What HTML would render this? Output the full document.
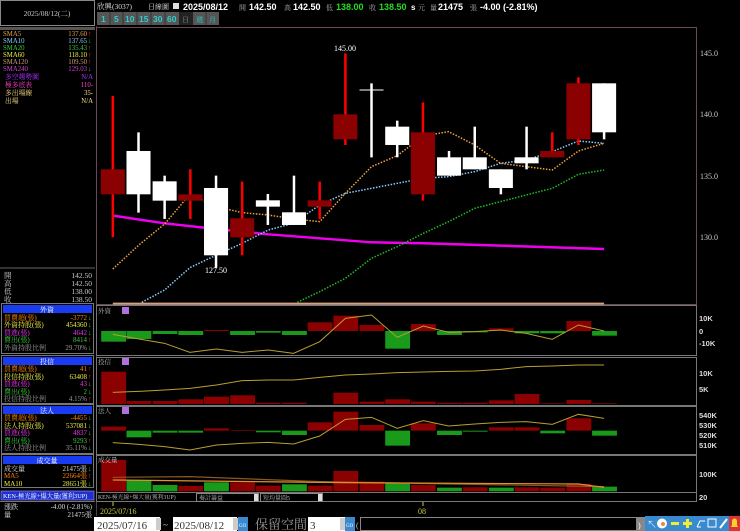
<!DOCTYPE html>
<html><head><meta charset="utf-8"><style>
html,body{margin:0;padding:0;background:#000;width:740px;height:531px;overflow:hidden}
svg{display:block}
text{font-family:"Liberation Serif","Noto Serif CJK SC","Noto Sans CJK TC",serif}
text.s{font-family:"Liberation Sans","Noto Sans CJK TC",sans-serif}
</style></head><body>
<svg width="740" height="531" viewBox="0 0 740 531" xmlns="http://www.w3.org/2000/svg" font-size="8">
<rect width="740" height="531" fill="#000"/>
<rect x="0.5" y="0.5" width="94" height="25" fill="#000" stroke="#888"/>
<text x="47" y="16" fill="#ccc" text-anchor="middle" font-size="7.5">2025/08/12(二)</text>
<rect x="0" y="27" width="95" height="3" fill="#555"/>
<g font-size="6.8">
<text x="3" y="36" fill="#e8a040">SMA5</text><text x="87" y="36" fill="#e8a040" text-anchor="end">137.60</text><text x="88" y="36" fill="#f22">↑</text>
<text x="3" y="43" fill="#8cf">SMA10</text><text x="87" y="43" fill="#8cf" text-anchor="end">137.65</text><text x="88" y="43" fill="#2c2">↓</text>
<text x="3" y="50" fill="#3c3">SMA20</text><text x="87" y="50" fill="#3c3" text-anchor="end">135.43</text><text x="88" y="50" fill="#f22">↑</text>
<text x="3" y="57" fill="#ee4">SMA60</text><text x="87" y="57" fill="#ee4" text-anchor="end">118.10</text><text x="88" y="57" fill="#f22">↑</text>
<text x="3" y="64" fill="#c9a070">SMA120</text><text x="87" y="64" fill="#c9a070" text-anchor="end">109.50</text><text x="88" y="64" fill="#f22">↑</text>
<text x="3" y="71" fill="#c4c">SMA240</text><text x="87" y="71" fill="#c4c" text-anchor="end">129.03</text><text x="88" y="71" fill="#2c2">↓</text>
<text x="5" y="79" fill="#a3f">多空趨勢圖</text><text x="93" y="79" fill="#a3f" text-anchor="end">N/A</text>
<text x="5" y="87" fill="#f4c">極多底表</text><text x="93" y="87" fill="#f4c" text-anchor="end">110-</text>
<text x="5" y="95" fill="#fd8">多出場線</text><text x="93" y="95" fill="#fd8" text-anchor="end">35-</text>
<text x="5" y="103" fill="#fd8">出場</text><text x="93" y="103" fill="#fd8" text-anchor="end">N/A</text>
</g>
<line x1="0" y1="268" x2="95" y2="268" stroke="#666"/>
<g font-size="7.5" fill="#ccc">
<text x="4" y="278">開</text><text x="92" y="278" text-anchor="end">142.50</text>
<text x="4" y="286">高</text><text x="92" y="286" text-anchor="end">142.50</text>
<text x="4" y="294">低</text><text x="92" y="294" text-anchor="end">138.00</text>
<text x="4" y="302">收</text><text x="92" y="302" text-anchor="end">138.50</text>
</g>
<g font-size="7">
<rect x="1.5" y="303.5" width="92" height="50" fill="none" stroke="#777"/>
<rect x="3" y="305" width="89" height="8" fill="#1a3cf0"/><text x="47" y="312" fill="#fff" text-anchor="middle">外資</text>
<text x="4" y="320" fill="#f80">買賣超(張)</text><text x="87" y="320" fill="#f80" text-anchor="end">-3772</text><text x="88" y="320" fill="#2c2">↓</text>
<text x="4" y="327" fill="#ee4">外資持股(張)</text><text x="87" y="327" fill="#ee4" text-anchor="end">454360</text><text x="88" y="327" fill="#2c2">↓</text>
<text x="4" y="335" fill="#e3e">買進(張)</text><text x="87" y="335" fill="#e3e" text-anchor="end">4642</text><text x="88" y="335" fill="#2c2">↓</text>
<text x="4" y="342" fill="#3c3">賣出(張)</text><text x="87" y="342" fill="#3c3" text-anchor="end">8414</text><text x="88" y="342" fill="#f22">↑</text>
<text x="4" y="350" fill="#999">外資持股比例</text><text x="87" y="350" fill="#999" text-anchor="end">29.70%</text><text x="88" y="350" fill="#2c2">↓</text>

<rect x="1.5" y="355.5" width="92" height="48" fill="none" stroke="#777"/>
<rect x="3" y="357" width="89" height="8" fill="#1a3cf0"/><text x="47" y="364" fill="#fff" text-anchor="middle">投信</text>
<text x="4" y="371" fill="#f80">買賣超(張)</text><text x="87" y="371" fill="#f80" text-anchor="end">41</text><text x="88" y="371" fill="#f22">↑</text>
<text x="4" y="379" fill="#ee4">投信持股(張)</text><text x="87" y="379" fill="#ee4" text-anchor="end">63408</text><text x="88" y="379" fill="#f22">↑</text>
<text x="4" y="386" fill="#e3e">買進(張)</text><text x="87" y="386" fill="#e3e" text-anchor="end">43</text><text x="88" y="386" fill="#2c2">↓</text>
<text x="4" y="394" fill="#3c3">賣出(張)</text><text x="87" y="394" fill="#3c3" text-anchor="end">2</text><text x="88" y="394" fill="#2c2">↓</text>
<text x="4" y="401" fill="#999">投信持股比例</text><text x="87" y="401" fill="#999" text-anchor="end">4.15%</text><text x="88" y="401" fill="#f22">↑</text>

<rect x="1.5" y="404.5" width="92" height="49" fill="none" stroke="#777"/>
<rect x="3" y="406" width="89" height="8" fill="#1a3cf0"/><text x="47" y="413" fill="#fff" text-anchor="middle">法人</text>
<text x="4" y="420" fill="#f80">買賣超(張)</text><text x="87" y="420" fill="#f80" text-anchor="end">-4455</text><text x="88" y="420" fill="#2c2">↓</text>
<text x="4" y="428" fill="#ee4">法人持股(張)</text><text x="87" y="428" fill="#ee4" text-anchor="end">537081</text><text x="88" y="428" fill="#2c2">↓</text>
<text x="4" y="435" fill="#e3e">買進(張)</text><text x="87" y="435" fill="#e3e" text-anchor="end">4837</text><text x="88" y="435" fill="#2c2">↓</text>
<text x="4" y="443" fill="#3c3">賣出(張)</text><text x="87" y="443" fill="#3c3" text-anchor="end">9293</text><text x="88" y="443" fill="#f22">↑</text>
<text x="4" y="450" fill="#999">法人持股比例</text><text x="87" y="450" fill="#999" text-anchor="end">35.11%</text><text x="88" y="450" fill="#2c2">↓</text>

<rect x="1.5" y="454.5" width="92" height="33" fill="none" stroke="#777"/>
<rect x="3" y="456" width="89" height="8" fill="#1a3cf0"/><text x="47" y="463" fill="#fff" text-anchor="middle">成交量</text>
<text x="4" y="471" fill="#ddd">成交量</text><text x="87" y="471" fill="#ddd" text-anchor="end">21475張</text><text x="88" y="471" fill="#2c2">↓</text>
<text x="4" y="478" fill="#f80">MA5</text><text x="87" y="478" fill="#f80" text-anchor="end">22664張</text><text x="88" y="478" fill="#f22">↑</text>
<text x="4" y="486" fill="#ee4">MA10</text><text x="87" y="486" fill="#ee4" text-anchor="end">28651張</text><text x="88" y="486" fill="#2c2">↓</text>

<rect x="1" y="491" width="93" height="9" fill="#2030d0" stroke="#99f" stroke-width="0.6"/>
<text x="3" y="498" fill="#fff" font-size="6.3">KEN-極光線+爆大量(獲利3UP)</text>
<line x1="0" y1="501.5" x2="95" y2="501.5" stroke="#777"/>
<text x="4" y="509" fill="#ddd">漲跌</text><text x="92" y="509" fill="#ddd" text-anchor="end">-4.00 (-2.81%)</text>
<text x="4" y="517" fill="#ddd">量</text><text x="92" y="517" fill="#ddd" text-anchor="end">21475張</text>
</g>
<rect x="94" y="517" width="3" height="14" fill="#fff"/>
<line x1="96.5" y1="26" x2="96.5" y2="516" stroke="#444"/>

<text x="97" y="9" fill="#ddd" font-size="7.5">欣興(3037)</text>
<text x="148" y="9" fill="#ddd" font-size="7">日線圖</text>
<rect x="173" y="3" width="6" height="6" fill="#ddd"/>
<g font-weight="bold" font-size="9">
<text x="183" y="10" fill="#fff" class="s">2025/08/12</text>
<text x="239" y="10" fill="#aaa" font-size="7" font-weight="normal">開</text><text x="249" y="10" fill="#fff" class="s">142.50</text>
<text x="284" y="10" fill="#aaa" font-size="7" font-weight="normal">高</text><text x="293" y="10" fill="#fff" class="s">142.50</text>
<text x="326" y="10" fill="#aaa" font-size="7" font-weight="normal">低</text><text x="336" y="10" fill="#2d2" class="s">138.00</text>
<text x="369" y="10" fill="#aaa" font-size="7" font-weight="normal">收</text><text x="379" y="10" fill="#2d2" class="s">138.50</text>
<text x="411" y="10" fill="#fff" class="s" font-size="8">s</text><text x="418" y="10" fill="#aaa" font-size="7" font-weight="normal">元</text>
<text x="430" y="10" fill="#aaa" font-size="7" font-weight="normal">量</text><text x="438" y="10" fill="#fff" class="s">21475</text>
<text x="470" y="10" fill="#aaa" font-size="7" font-weight="normal">張</text><text x="480" y="10" fill="#fff" class="s">-4.00 (-2.81%)</text>
</g>
<g font-weight="bold" font-size="8.5" fill="#3cc">
<rect x="97" y="12" width="82" height="13" fill="#555"/>
<rect x="179" y="12" width="14" height="13" fill="#222"/>
<rect x="193" y="12" width="26" height="13" fill="#555"/>
<g stroke="#333" stroke-width="1"><line x1="110" y1="12" x2="110" y2="25"/><line x1="123" y1="12" x2="123" y2="25"/><line x1="137" y1="12" x2="137" y2="25"/><line x1="151" y1="12" x2="151" y2="25"/><line x1="165" y1="12" x2="165" y2="25"/><line x1="206" y1="12" x2="206" y2="25"/></g>
<text x="101" y="22" class="s">1</text><text x="114" y="22" class="s">5</text><text x="125" y="22" class="s">10</text><text x="139" y="22" class="s">15</text><text x="153" y="22" class="s">30</text><text x="167" y="22" class="s">60</text>
<text x="182" y="22" fill="#888" font-weight="normal" font-size="7">日</text><text x="196" y="22" font-weight="normal" font-size="7">週</text><text x="209" y="22" font-weight="normal" font-size="7">月</text>
</g>

<rect x="96.5" y="27.5" width="600" height="277" fill="none" stroke="#6a4858"/>
<g fill="none" stroke="#777">
<rect x="96.5" y="305.5" width="600" height="50"/>
<rect x="96.5" y="357.5" width="600" height="48"/>
<rect x="96.5" y="406.5" width="600" height="48"/>
<rect x="96.5" y="455.5" width="600" height="37"/>
<rect x="96.5" y="492.5" width="600" height="9"/>
</g>
<g fill="#ccc" font-size="8">
<text x="700" y="56">145.0</text><text x="700" y="117">140.0</text><text x="700" y="179">135.0</text><text x="700" y="240">130.0</text>
</g>
<g fill="#ddd" font-size="7.5" font-weight="bold">
<text x="699" y="321" class="s">10K</text><text x="699" y="334" class="s">0</text><text x="699" y="346" class="s">-10K</text>
<text x="699" y="376" class="s">10K</text><text x="699" y="392" class="s">5K</text>
<text x="699" y="418" class="s">540K</text><text x="699" y="428" class="s">530K</text><text x="699" y="438" class="s">520K</text><text x="699" y="448" class="s">510K</text>
<text x="699" y="477" class="s">100K</text><text x="699" y="500" class="s">20</text>
</g>

<g transform="translate(90,25) scale(0.4146,0.3333)">
<line x1="55" y1="836" x2="1240" y2="836" stroke="#d9a080" stroke-width="2" vector-effect="non-scaling-stroke"/>
<polyline fill="none" stroke="#e0e" stroke-width="2.5" vector-effect="non-scaling-stroke" points="55,572 180,595 305,612 430,628 554,640 679,652 804,655 990,662 1240,672"/>
<g fill="none" stroke-dasharray="1.5 1.5" stroke-width="1.5">
<polyline stroke="#2b2" vector-effect="non-scaling-stroke" points="500,832 554,800 616,760 679,700 741,665 804,625 865,590 928,550 990,530 1052,510 1115,490 1178,448 1240,435"/>
<polyline stroke="#8cf" vector-effect="non-scaling-stroke" points="125,832 180,795 241,728 305,690 367,655 430,615 491,595 554,540 616,505 679,490 741,475 804,460 865,455 928,440 990,415 1052,405 1115,380 1178,348 1240,355"/>
<polyline stroke="#f0a040" vector-effect="non-scaling-stroke" points="55,732 118,660 180,597 241,508 305,545 367,563 430,570 491,582 554,590 616,505 679,425 741,392 804,333 865,320 928,360 990,415 1052,425 1115,435 1178,378 1240,355"/>
</g>
<g stroke="#f00" stroke-width="2.5">
<line x1="55" y1="213" x2="55" y2="637" vector-effect="non-scaling-stroke"/>
<line x1="242" y1="433" x2="242" y2="582" vector-effect="non-scaling-stroke"/>
<line x1="367" y1="470" x2="367" y2="691" vector-effect="non-scaling-stroke"/>
<line x1="554" y1="470" x2="554" y2="582" vector-effect="non-scaling-stroke"/>
<line x1="616" y1="85" x2="616" y2="360" vector-effect="non-scaling-stroke"/>
<line x1="803" y1="232" x2="803" y2="527" vector-effect="non-scaling-stroke"/>
<line x1="1115" y1="322" x2="1115" y2="397" vector-effect="non-scaling-stroke"/>
<line x1="1178" y1="157" x2="1178" y2="360" vector-effect="non-scaling-stroke"/>
</g>
<g fill="#8b0000">
<rect x="26" y="433" width="58" height="75"/>
<rect x="213" y="508" width="58" height="19"/>
<rect x="338" y="580" width="58" height="57"/>
<rect x="525" y="526" width="58" height="19"/>
<rect x="587" y="268" width="58" height="75"/>
<rect x="774" y="322" width="58" height="186"/>
<rect x="1086" y="378" width="58" height="19"/>
<rect x="1149" y="175" width="58" height="168"/>
</g>
<g stroke="#fff" stroke-width="2.5">
<line x1="117" y1="322" x2="117" y2="563" vector-effect="non-scaling-stroke"/>
<line x1="180" y1="452" x2="180" y2="582" vector-effect="non-scaling-stroke"/>
<line x1="304" y1="452" x2="304" y2="728" vector-effect="non-scaling-stroke"/>
<line x1="429" y1="507" x2="429" y2="600" vector-effect="non-scaling-stroke"/>
<line x1="492" y1="452" x2="492" y2="600" vector-effect="non-scaling-stroke"/>
<line x1="679" y1="175" x2="679" y2="397" vector-effect="non-scaling-stroke"/>
<line x1="650" y1="195" x2="708" y2="195" vector-effect="non-scaling-stroke" stroke-width="1"/>
<line x1="741" y1="287" x2="741" y2="397" vector-effect="non-scaling-stroke"/>
<line x1="866" y1="378" x2="866" y2="452" vector-effect="non-scaling-stroke"/>
<line x1="928" y1="305" x2="928" y2="433" vector-effect="non-scaling-stroke"/>
<line x1="991" y1="433" x2="991" y2="508" vector-effect="non-scaling-stroke"/>
<line x1="1053" y1="305" x2="1053" y2="433" vector-effect="non-scaling-stroke"/>
<line x1="1240" y1="175" x2="1240" y2="343" vector-effect="non-scaling-stroke"/>
</g>
<g fill="#fff">
<rect x="88" y="378" width="58" height="130"/>
<rect x="151" y="469" width="58" height="58"/>
<rect x="275" y="489" width="58" height="202"/>
<rect x="400" y="526" width="58" height="19"/>
<rect x="463" y="562" width="58" height="38"/>
<rect x="712" y="305" width="58" height="55"/>
<rect x="837" y="397" width="58" height="55"/>
<rect x="899" y="397" width="58" height="36"/>
<rect x="962" y="433" width="58" height="56"/>
<rect x="1024" y="397" width="58" height="18"/>
<rect x="1211" y="175" width="58" height="147"/>
</g>
</g>
<text x="345" y="51" fill="#fff" font-size="8" text-anchor="middle">145.00</text>
<text x="216" y="273" fill="#fff" font-size="8" text-anchor="middle">127.50</text>

<g transform="translate(90,300) scale(0.4146,0.3333)">
<g fill="#1a9a1a">
<rect x="27" y="93" width="60" height="32"/><rect x="88" y="93" width="60" height="24"/><rect x="151" y="93" width="60" height="9"/><rect x="213" y="93" width="60" height="12"/>
<rect x="338" y="93" width="60" height="12"/><rect x="400" y="93" width="60" height="5"/><rect x="463" y="93" width="60" height="12"/>
<rect x="712" y="93" width="60" height="53"/><rect x="837" y="93" width="60" height="12"/><rect x="899" y="93" width="60" height="4"/>
<rect x="1024" y="93" width="60" height="7"/><rect x="1086" y="93" width="60" height="7"/><rect x="1211" y="93" width="60" height="14"/>
</g>
<g fill="#8b0000">
<rect x="275" y="90" width="60" height="3"/><rect x="525" y="67" width="60" height="26"/><rect x="587" y="47" width="60" height="46"/><rect x="650" y="75" width="60" height="18"/>
<rect x="774" y="72" width="60" height="21"/><rect x="962" y="85" width="60" height="8"/><rect x="1149" y="63" width="60" height="30"/>
</g>
<polyline fill="none" stroke="#b8a030" stroke-width="1" vector-effect="non-scaling-stroke" points="55,103 118,117 180,130 241,157 305,147 367,157 430,150 491,160 554,125 616,55 679,45 741,112 804,78 865,97 928,95 990,90 1052,100 1115,118 1178,75 1240,93"/>
<g fill="#8b0000">
<rect x="27" y="215" width="60" height="97"/><rect x="88" y="303" width="60" height="9"/><rect x="151" y="303" width="60" height="9"/><rect x="213" y="298" width="60" height="14"/>
<rect x="275" y="290" width="60" height="22"/><rect x="338" y="286" width="60" height="26"/><rect x="400" y="308" width="60" height="4"/><rect x="463" y="308" width="60" height="4"/>
<rect x="587" y="278" width="60" height="34"/><rect x="650" y="305" width="60" height="7"/><rect x="712" y="298" width="60" height="14"/><rect x="774" y="305" width="60" height="7"/>
<rect x="837" y="308" width="60" height="4"/><rect x="899" y="308" width="60" height="4"/><rect x="962" y="301" width="60" height="11"/><rect x="1024" y="282" width="60" height="30"/>
<rect x="1086" y="310" width="60" height="2"/><rect x="1149" y="300" width="60" height="12"/><rect x="1211" y="310" width="60" height="2"/>
</g>
<polyline fill="none" stroke="#b8a030" stroke-width="1" vector-effect="non-scaling-stroke" points="55,277 118,274 180,270 241,265 305,255 367,242 430,240 491,240 554,232 616,225 679,222 741,218 804,216 865,214 928,213 990,208 1052,200 1115,198 1178,195 1240,195"/>
<g fill="#1a9a1a">
<rect x="88" y="392" width="60" height="20"/><rect x="151" y="392" width="60" height="6"/><rect x="213" y="392" width="60" height="6"/>
<rect x="400" y="392" width="60" height="5"/><rect x="463" y="392" width="60" height="13"/><rect x="712" y="392" width="60" height="45"/>
<rect x="837" y="392" width="60" height="13"/><rect x="899" y="392" width="60" height="3"/><rect x="1086" y="392" width="60" height="8"/><rect x="1211" y="392" width="60" height="15"/>
</g>
<g fill="#8b0000">
<rect x="27" y="380" width="60" height="12"/><rect x="275" y="385" width="60" height="7"/><rect x="338" y="390" width="60" height="2"/>
<rect x="525" y="367" width="60" height="25"/><rect x="587" y="335" width="60" height="57"/><rect x="650" y="375" width="60" height="17"/>
<rect x="774" y="370" width="60" height="22"/><rect x="962" y="382" width="60" height="10"/><rect x="1024" y="382" width="60" height="10"/><rect x="1149" y="355" width="60" height="37"/>
</g>
<polyline fill="none" stroke="#b8a030" stroke-width="1" vector-effect="non-scaling-stroke" points="55,428 118,433 180,440 241,450 305,435 367,430 430,427 491,432 554,408 616,358 679,352 741,385 804,362 865,378 928,372 990,367 1052,365 1115,373 1178,343 1240,355"/>
<g fill="#8b0000">
<rect x="27" y="480" width="60" height="94"/><rect x="213" y="558" width="60" height="16"/><rect x="338" y="547" width="60" height="27"/><rect x="400" y="557" width="60" height="17"/>
<rect x="525" y="557" width="60" height="17"/><rect x="587" y="513" width="60" height="61"/><rect x="650" y="545" width="60" height="29"/><rect x="774" y="555" width="60" height="19"/>
<rect x="899" y="562" width="60" height="12"/><rect x="1024" y="562" width="60" height="12"/><rect x="1086" y="563" width="60" height="11"/><rect x="1149" y="552" width="60" height="22"/>
</g>
<g fill="#1a9a1a">
<rect x="88" y="540" width="60" height="34"/><rect x="151" y="555" width="60" height="19"/><rect x="275" y="547" width="60" height="27"/><rect x="463" y="553" width="60" height="21"/>
<rect x="712" y="548" width="60" height="26"/><rect x="837" y="563" width="60" height="11"/><rect x="962" y="563" width="60" height="11"/><rect x="1211" y="560" width="60" height="14"/>
</g>
<polyline fill="none" stroke="#8a5a20" stroke-width="1.2" vector-effect="non-scaling-stroke" points="55,532 241,530 554,545 1240,560"/>
<polyline fill="none" stroke="#e09030" stroke-width="1.2" vector-effect="non-scaling-stroke" points="55,540 616,548 1178,552 1240,562"/>
</g>
<g font-size="6.5" fill="#bbb">
<text x="98" y="313">外資</text><rect x="122" y="307" width="7" height="7" fill="#b070e0"/>
<text x="98" y="364">投信</text><rect x="122" y="358" width="7" height="7" fill="#b070e0"/>
<text x="98" y="413">法人</text><rect x="122" y="407" width="7" height="7" fill="#b070e0"/>
<text x="98" y="462">成交量</text>
<text x="98" y="499" font-size="5.8">KEN-極光線+爆大量(獲利3UP)</text>
</g>
<rect x="196.5" y="493.5" width="62" height="8" fill="#000" stroke="#888"/><text x="199" y="500" fill="#bbb" font-size="6">奏計籌益</text><rect x="254" y="494" width="4" height="7" fill="#ddd"/>
<rect x="260.5" y="493.5" width="62" height="8" fill="#000" stroke="#888"/><text x="263" y="500" fill="#bbb" font-size="6">短均量圓5</text><rect x="318" y="494" width="4" height="7" fill="#ddd"/>

<line x1="113" y1="502" x2="113" y2="506" stroke="#cc4"/>
<line x1="423" y1="502" x2="423" y2="506" stroke="#cc4"/>
<text x="100" y="514" fill="#cc4" font-size="8">2025/07/16</text>
<text x="418" y="514" fill="#cc4" font-size="8">08</text>

<rect x="96" y="517" width="64" height="14" fill="#fff"/>
<text x="97" y="529" fill="#333" font-size="11">2025/07/16</text>
<rect x="156" y="518" width="5" height="12" fill="#ccc"/>
<text x="163" y="528" fill="#ccc" font-size="9">~</text>
<rect x="173" y="517" width="64" height="14" fill="#fff"/>
<text x="174" y="529" fill="#333" font-size="11">2025/08/12</text>
<rect x="233" y="518" width="5" height="12" fill="#ccc"/>
<rect x="238" y="517" width="10" height="14" fill="#3a8ad0"/><text x="239" y="527" fill="#fff" font-size="5">GO</text>
<text x="255" y="529" fill="#999" font-size="13">保留空間</text>
<rect x="308" y="517" width="38" height="14" fill="#fff"/>
<text x="310" y="529" fill="#333" font-size="11">3</text>
<rect x="340" y="518" width="5" height="12" fill="#ccc"/>
<rect x="345" y="517" width="10" height="14" fill="#3a8ad0"/><text x="346" y="527" fill="#fff" font-size="5">GO</text>
<text x="356" y="528" fill="#ccc" font-size="8">(</text>
<rect x="360.5" y="517.5" width="276" height="13" fill="#000" stroke="#888"/>
<rect x="636" y="517" width="9" height="14" fill="#888"/><text x="638" y="528" fill="#fff" font-size="8">)</text>
<rect x="645" y="516" width="95" height="15" fill="#3a8ad0"/>
<text x="647" y="528" fill="#fff" font-size="10">↖</text>
<circle cx="662" cy="523.5" r="5" fill="#fff"/><circle cx="663" cy="524" r="2" fill="#e84"/>
<rect x="671" y="522" width="8" height="3" fill="#ee3"/>
<rect x="683" y="522" width="9" height="3" fill="#ee3"/><rect x="686" y="519" width="3" height="9" fill="#ee3"/>
<path d="M697 527 l3 -6 h5 M697 527 l4 0" stroke="#fff" fill="none"/>
<rect x="708" y="519" width="8" height="8" fill="none" stroke="#fff"/>
<path d="M720 528 l7 -9" stroke="#fff" stroke-width="2"/>
<rect x="729" y="516" width="11" height="15" fill="#d33"/>
<path d="M731 527 h7 l-1 -2 v-4 a2.5 2.5 0 0 0 -5 0 v4 z" fill="#fc3"/>
</svg>
</body></html>
